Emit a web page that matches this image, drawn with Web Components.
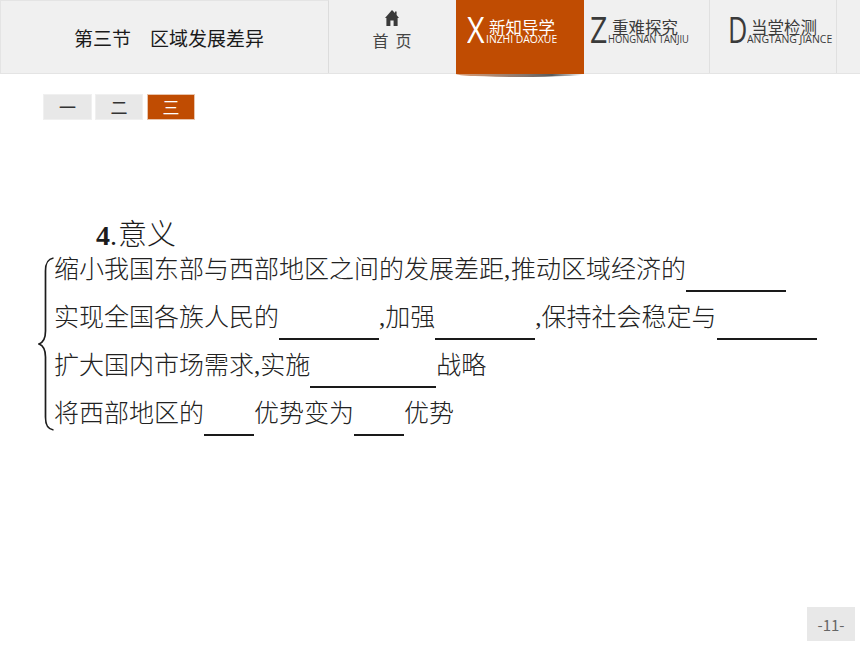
<!DOCTYPE html>
<html lang="zh">
<head>
<meta charset="utf-8">
<title>第三节 区域发展差异</title>
<style>
  html, body { margin: 0; height: 645px; overflow: hidden; background: #fff; }
  body { font-family: "Noto Sans CJK SC", "Liberation Sans", sans-serif; }
</style>
</head>
<body>
<lesson-page>
  <nav-bar slot="nav">
    <nav-title>第三节　区域发展差异</nav-title>
    <nav-home></nav-home>
    <nav-link letter="X" en="INZHI DAOXUE" en-scale=".94" active>新知导学</nav-link>
    <nav-link letter="Z" en="HONGNAN TANJIU" en-scale=".855" style="width:126px;--pad:6px;--txt-x:-1px;--cn-x:4px">重难探究</nav-link>
    <nav-link letter="D" en="ANGTANG JIANCE" en-scale=".95" style="width:127px;--pad:18px;--big-x:.72;--txt-x:0px;--cn-x:4px">当堂检测</nav-link>
    <nav-end></nav-end>
  </nav-bar>
  <tab-row slot="tabs">
    <tab-item>一</tab-item>
    <tab-item>二</tab-item>
    <tab-item active>三</tab-item>
  </tab-row>
  <brace-list slot="main" heading="意义" num="4">
    <fill-line>缩小我国东部与西部地区之间的发展差距<i style="margin-right:.75px">,</i>推动区域经济的<fill-blank w="100"></fill-blank></fill-line>
    <fill-line>实现全国各族人民的<fill-blank w="100"></fill-blank><i>,</i>加强<fill-blank w="100"></fill-blank><i>,</i>保持社会稳定与<fill-blank w="100"></fill-blank></fill-line>
    <fill-line>扩大国内市场需求<i>,</i>实施<fill-blank w="126"></fill-blank>战略</fill-line>
    <fill-line>将西部地区的<fill-blank w="50"></fill-blank>优势变为<fill-blank w="50"></fill-blank>优势</fill-line>
  </brace-list>
  <page-num slot="foot">-11-</page-num>
</lesson-page>

<script>
const shadow = (el, html) => {
  el.attachShadow({ mode: 'open' }).innerHTML = html;
};

customElements.define('lesson-page', class extends HTMLElement {
  constructor () {
    super();
    shadow(this, `
      <style>
        :host { display: flex; flex-direction: column; height: 645px; }
        .foot { margin-top: auto; display: flex; justify-content: flex-end; padding: 0 5px 4px 0; }
      </style>
      <slot name="nav"></slot>
      <slot name="tabs"></slot>
      <slot name="main"></slot>
      <div class="foot"><slot name="foot"></slot></div>
    `);
  }
});

customElements.define('nav-bar', class extends HTMLElement {
  constructor () {
    super();
    shadow(this, `
      <style>
        :host {
          display: flex; height: 73px; flex: none;
          background: #f0f0f0; border-bottom: 1px solid #e4e4e4; box-sizing: content-box;
        }
      </style>
      <slot></slot>
    `);
  }
});

customElements.define('nav-title', class extends HTMLElement {
  constructor () {
    super();
    shadow(this, `
      <style>
        :host {
          display: flex; align-items: center; box-sizing: border-box;
          width: 329px; height: 73px; padding: 1px 0 0 73px;
          border-right: 1px solid #dcdcdc; border-left: 1px solid #e4e4e4;
          border-top: 1px solid #e4e4e4;
          font-size: 19px; color: #1a1a1a; white-space: nowrap;
        }
      </style>
      <slot></slot>
    `);
  }
});

customElements.define('nav-home', class extends HTMLElement {
  constructor () {
    super();
    shadow(this, `
      <style>
        :host {
          display: flex; flex-direction: column; align-items: center; box-sizing: border-box;
          width: 127px; height: 73px; padding: 10px 1px 0 0;
          font-size: 16px; color: #444; line-height: 22px;
        }
        svg { display: block; width: 14px; height: 16px; margin-bottom: 3px; }
      </style>
      <svg viewBox="0 0 14 16"><path fill="#3a3a3a" d="M7 0 L10 3 V1.5 H11.6 V5 L14 8 H12.6 V16 H8.6 V10.5 H5.4 V16 H1.4 V8 H0 Z"/></svg>
      <span>首&nbsp;&nbsp;页</span>
    `);
  }
});

customElements.define('nav-link', class extends HTMLElement {
  constructor () {
    super();
    shadow(this, `
      <style>
        :host {
          position: relative; display: flex; box-sizing: border-box;
          width: 128px; height: 73px; flex: none;
          padding: 11px 0 0 var(--pad, 11px);
          border-right: 1px solid #e0e0e0; color: #3a3a3a; white-space: nowrap;
        }
        :host([active]) { color: #fff; background: #c04c02; border-right: 0; height: 74px; }
        :host([active])::after {
          content: ""; position: absolute; left: 0; right: 0; top: 74px; height: 3px;
          background: linear-gradient(90deg, rgba(192,76,2,.55) 0%, rgba(90,70,60,.75) 55%, rgba(60,60,60,.85) 75%, rgba(120,120,120,0) 100%);
          border-radius: 0 0 50% 50% / 0 0 100% 100%;
        }
        .big {
          font: 37px/36px "Open Sans", sans-serif; display: block; width: 19px;
          transform: scaleX(var(--big-x, .82)); transform-origin: 0 50%; margin-right: 3px;
        }
        .txt { display: flex; flex-direction: column; padding-top: 7px; margin-left: calc(var(--txt-x, 0px) - 3px); }
        .cn { font-size: 16.5px; line-height: 19px; height: 15px; padding-left: var(--cn-x, 3px); }
        .en {
          font: 11px/11px "Open Sans", sans-serif;
          transform: scaleX(${this.getAttribute('en-scale')}); transform-origin: 0 0;
        }
      </style>
      <span class="big">${this.getAttribute('letter')}</span>
      <div class="txt">
        <span class="cn"><slot></slot></span>
        <span class="en">${this.getAttribute('en')}</span>
      </div>
    `);
  }
});

customElements.define('nav-end', class extends HTMLElement {
  constructor () {
    super();
    shadow(this, `<style>:host { display: block; flex: 1; }</style>`);
  }
});

customElements.define('tab-row', class extends HTMLElement {
  constructor () {
    super();
    shadow(this, `
      <style>
        :host { display: flex; gap: 3px; padding: 20px 0 0 43px; flex: none; }
      </style>
      <slot></slot>
    `);
  }
});

customElements.define('tab-item', class extends HTMLElement {
  constructor () {
    super();
    shadow(this, `
      <style>
        :host {
          display: flex; align-items: center; justify-content: center; box-sizing: border-box;
          width: 48px; height: 26px; padding-bottom: 1px; background: #e8e8e8; border: 1px solid #f0f0f0;
          font-size: 17px; color: #333;
        }
        :host(:first-child) { width: 49px; }
        :host([active]) { background: #c04c02; color: #fff; border-color: #e8c4ac; margin-left: 1px; }
      </style>
      <slot></slot>
    `);
  }
});

customElements.define('brace-list', class extends HTMLElement {
  constructor () {
    super();
    shadow(this, `
      <style>
        :host { display: block; flex: none; padding: 92px 0 0 38px; color: #1c1c1c; }
        h2 {
          margin: 0 0 0 58px; height: 40px; font-size: 29px; font-weight: 300; line-height: 40px;
          display: flex; align-items: baseline;
        }
        b { font: bold 28px/40px "Liberation Serif", serif; margin-right: 1px; }
        b i { font-style: normal; font-weight: 400; }
        .wrap { display: flex; margin-top: -9px; }
        svg { flex: none; width: 16px; height: 174px; margin-top: 14px; }
      </style>
      <h2><b>${this.getAttribute('num')}<i>.</i></b>${this.getAttribute('heading')}</h2>
      <div class="wrap">
        <svg viewBox="0 0 16 174" fill="none" stroke="#1c1c1c">
          <path stroke-width="1.7" d="M15.5 1 C9.5 2 7.5 6 7.5 14 V74 C7.5 81 5 85.5 1 87 C5 88.5 7.5 93 7.5 100 V160 C7.5 168 9.5 172 15.5 173"/>
        </svg>
        <div><slot></slot></div>
      </div>
    `);
  }
});

customElements.define('fill-line', class extends HTMLElement {
  constructor () {
    super();
    shadow(this, `
      <style>
        :host {
          display: block; height: 48px; line-height: 48px; white-space: nowrap;
          font-size: 25px; font-weight: 300; color: #222;
        }
        ::slotted(i) { font: 25px "Liberation Serif", serif; }
      </style>
      <slot></slot>
    `);
  }
});

customElements.define('fill-blank', class extends HTMLElement {
  constructor () {
    super();
    shadow(this, `
      <style>
        :host {
          display: inline-block; box-sizing: border-box; width: ${this.getAttribute('w')}px;
          height: 24px; vertical-align: -14px; border-bottom: 2px solid #1a1a1a;
        }
      </style>
    `);
  }
});

customElements.define('page-num', class extends HTMLElement {
  constructor () {
    super();
    shadow(this, `
      <style>
        :host {
          display: flex; align-items: center; justify-content: center;
          width: 48px; height: 34px; background: #e8e8e8; color: #666;
          font-size: 15px;
        }
      </style>
      <slot></slot>
    `);
  }
});
</script>
</body>
</html>
